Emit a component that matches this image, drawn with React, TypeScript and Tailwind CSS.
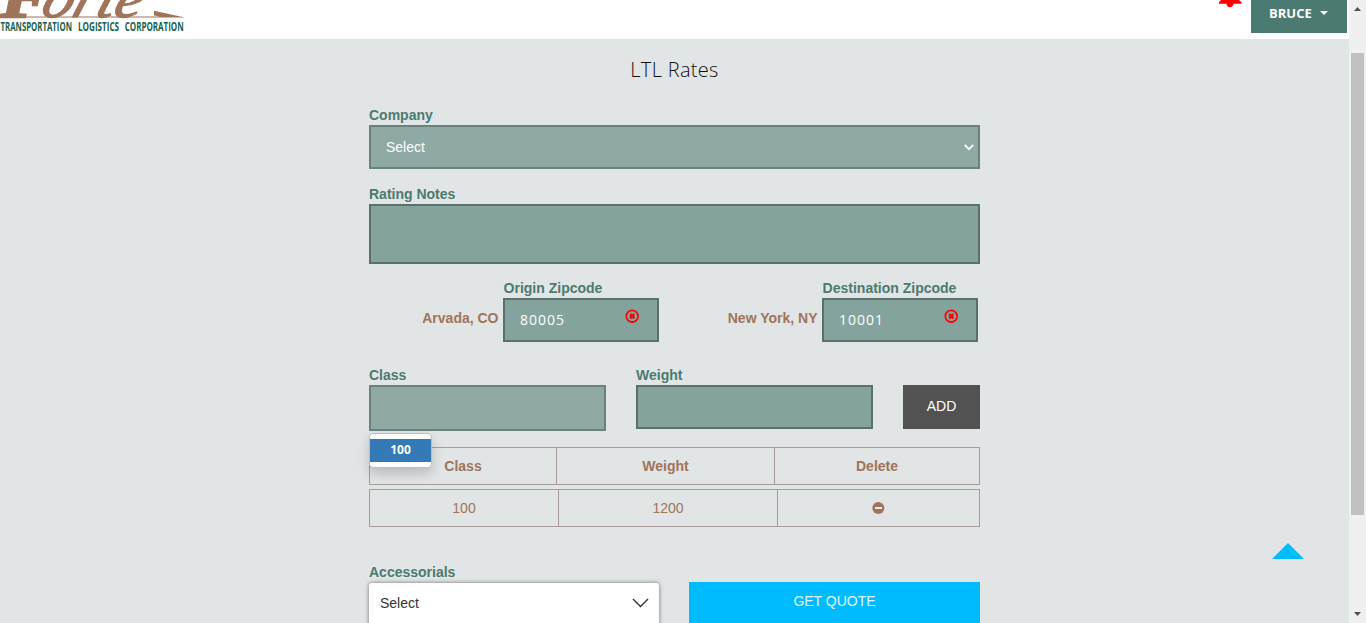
import React from "react";

const label = "block h-5 text-[14px] leading-5 font-bold text-[#4b7a70] whitespace-nowrap";
const field = "border-2 border-[#5a716b] bg-[#84a39d]";

function Logo() {
  return (
    <svg width="190" height="39" viewBox="0 0 190 39" className="block overflow-hidden">
      <g fill="#a0745a" stroke="#a0745a" fontFamily="Liberation Serif, serif" fontStyle="italic">
        <text x="1" y="17" fontSize="60" fontWeight="700" strokeWidth="2.5" textLength="48" lengthAdjust="spacingAndGlyphs">F</text>
        <text x="0" y="0" transform="translate(39 17.2) skewX(-18)" fontSize="56" strokeWidth="1.2" textLength="100" lengthAdjust="spacingAndGlyphs">orte</text>
      </g>
      <path d="M1 16.6H160L154 15.5V10.8L185 17.6H1Z" fill="#a0745a" />
      <g fontSize="12" fontWeight="700" fontFamily="Open Sans, sans-serif" fill="#17624f">
        <text x="0.5" y="30.7" textLength="71.5" lengthAdjust="spacingAndGlyphs">TRANSPORTATION</text>
        <text x="78" y="30.7" textLength="41" lengthAdjust="spacingAndGlyphs">LOGISTICS</text>
        <text x="124.7" y="30.7" textLength="59" lengthAdjust="spacingAndGlyphs">CORPORATION</text>
      </g>
    </svg>
  );
}

function ClearIcon() {
  return (
    <svg width="14" height="14" viewBox="0 0 14 14" className="block">
      <circle cx="7.2" cy="7.3" r="5.9" fill="none" stroke="#f00" strokeWidth="1.7" />
      <path d="M5.1 5.2L9.3 9.4M9.3 5.2L5.1 9.4" stroke="#f00" strokeWidth="2.4" />
    </svg>
  );
}

function Zip({ city, title, value }: { city: string; title: string; value: string }) {
  return (
    <div className="flex w-[290px] justify-end">
      <div className="mr-[4.5px] mt-[30px] h-5 text-[14px] leading-5 font-bold text-[#a0745a] whitespace-nowrap">{city}</div>
      <div className="w-[156px]">
        <div className={`${label} pl-[0.6px]`}>{title}</div>
        <div className={`${field} flex h-11 items-start justify-between pl-[15px] pr-[18px]`}>
          <span className="font-['Open_Sans',sans-serif] text-[14px] leading-[40px] tracking-[1px] text-white">{value}</span>
          <span className="mt-[9px]"><ClearIcon /></span>
        </div>
      </div>
    </div>
  );
}

export default function App() {
  return (
    <div className="flex h-[623px] w-full overflow-hidden bg-[#e1e5e5] font-['Liberation_Sans',Arial,sans-serif]">
      <div className="flex min-w-0 flex-1 flex-col">
        <header className="flex h-[39px] shrink-0 items-start justify-between bg-white">
          <Logo />
          <div className="flex pr-[2px]">
            <svg width="24" height="9" viewBox="0 0 24 9" className="mr-[9.5px]">
              <path d="M3 0H21L23.5 2.3V3.8H15.5Q15 7.2 12 7.2T8.5 3.8H1V2.3Z" fill="#f00" />
            </svg>
            <button className="flex h-[33px] w-[96px] items-start bg-[#4b7a70] pl-[18px] font-['Open_Sans',sans-serif] text-[13px] font-bold leading-[26px] text-white">
              <span className="w-[51px] text-left">BRUCE</span>
              <svg width="8" height="4" viewBox="0 0 8 4" className="mt-[11px]"><path d="M0 0H8L4 4Z" fill="#fff" /></svg>
            </button>
          </div>
        </header>

        <main className="ml-[369px] flex w-[611px] flex-col">
          <h1 className="mt-[16px] h-[30px] text-center font-['Open_Sans',sans-serif] text-[20px] font-light leading-[29px] tracking-[0.3px] text-[#111]">LTL Rates</h1>

          <div className="mt-[20px]">
            <div className={label}>Company</div>
            <div className="flex h-11 items-center justify-between border-2 border-[#6b817b] bg-[#8fa9a5] pl-[15px] pr-[4px] text-[14px] text-white">
              Select
              <svg width="10" height="7" viewBox="0 0 10 7"><path d="M0.8 1L5 5.2L9.2 1" fill="none" stroke="#fff" strokeWidth="1.9" /></svg>
            </div>
          </div>

          <div className="mt-[15px]">
            <div className={label}>Rating Notes</div>
            <div className={`${field} h-[60px]`} />
          </div>

          <div className="mt-[14px] flex gap-[29px]">
            <Zip city="Arvada, CO" title="Origin Zipcode" value="80005" />
            <Zip city="New York, NY" title="Destination Zipcode" value="10001" />
          </div>

          <div className="mt-[23px] flex h-[66px] items-start gap-[30px]">
            <div className="relative w-[237px]">
              <div className={label}>Class</div>
              <div className="h-[46px] border-2 border-[#6b817b] bg-[#8fa9a5]" />
              <div className="absolute left-0 top-[68px] z-10 h-[35px] w-[63px] rounded-[4px] border border-[#bbbfbf] bg-white py-[5px] shadow-[0_6px_12px_rgba(0,0,0,0.175)]">
                <div className="h-[23px] bg-[#337ab7] text-center font-['Open_Sans',sans-serif] text-[12px] font-bold leading-[22px] text-white">100</div>
              </div>
            </div>
            <div className="w-[237px]">
              <div className={label}>Weight</div>
              <div className={`${field} h-11`} />
            </div>
            <button className="mt-5 flex h-11 w-[77px] items-start justify-center bg-[#525252] text-[14px] leading-[42px] text-white">ADD</button>
          </div>

          <div className="mt-[16px] flex h-[38px] border border-[#a89c9a] text-center text-[14px] font-bold leading-[36px] text-[#a0745a]">
            <div className="w-[187px] border-r border-[#a89c9a]">Class</div>
            <div className="w-[218px] border-r border-[#a89c9a]">Weight</div>
            <div className="flex-1">Delete</div>
          </div>
          <div className="mt-1 flex h-[38px] border border-[#a89c9a] text-center text-[14px] leading-[36px] text-[#a0745a]">
            <div className="w-[189px] border-r border-[#a89c9a]">100</div>
            <div className="w-[219px] border-r border-[#a89c9a]">1200</div>
            <div className="flex flex-1 items-center justify-center">
              <svg width="13" height="12" viewBox="0 0 13 12"><circle cx="6.3" cy="6" r="6" fill="#a0745a" /><path d="M3 5H10V7H3Z" fill="#eef0f0" /></svg>
            </div>
          </div>

          <div className="mt-[35px] flex items-start gap-[30px]">
            <div className="w-[290px]">
              <div className={label}>Accessorials</div>
              <div className="mt-[1px] flex h-[44px] items-start justify-between rounded-[3px] bg-white pl-[11px] pr-[10px] text-[14px] leading-[40px] text-[#333] shadow-[0_0_4px_rgba(0,0,0,0.5)]">
                Select
                <svg width="17" height="10" viewBox="0 0 17 10" className="mt-[15px]"><path d="M1 1L8.5 8.5L16 1" fill="none" stroke="#333" strokeWidth="1.4" /></svg>
              </div>
            </div>
            <button className="mt-5 flex h-[44px] w-[291px] items-start justify-center bg-[#00bcff] text-[14px] leading-[38px] text-[#e1f6ff]">GET QUOTE</button>
          </div>
        </main>
        <svg width="32" height="16" viewBox="0 0 32 16" className="absolute left-[1272px] top-[543px]"><path d="M16 0L32 16H0Z" fill="#00bcff" /></svg>
      </div>

      <aside className="flex w-[17px] shrink-0 flex-col items-center bg-[#f0f0f0]">
        <svg width="7" height="4" viewBox="0 0 7 4" className="mt-[7px] shrink-0"><path d="M0 4L3.5 0L7 4Z" fill="#505050" /></svg>
        <div className="mt-[42px] h-[462px] w-[13px] shrink-0 bg-[#c1c1c1]" />
        <svg width="7" height="4" viewBox="0 0 7 4" className="mt-[97px] shrink-0"><path d="M0 0H7L3.5 4Z" fill="#505050" /></svg>
      </aside>
    </div>
  );
}
